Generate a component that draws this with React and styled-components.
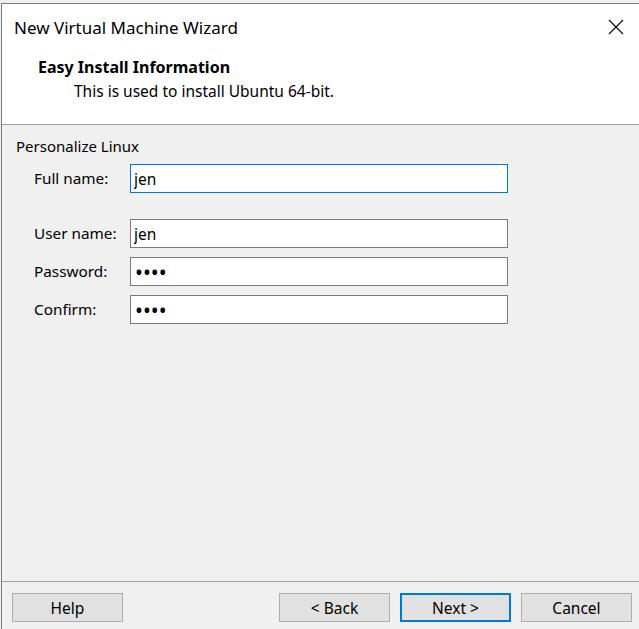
import React from "react";
import styled, { createGlobalStyle } from "styled-components";

const GlobalStyle = createGlobalStyle`
  *, *::before, *::after {
    box-sizing: border-box;
  }
  html, body {
    margin: 0;
    padding: 0;
    background: #f0f0f0;
    overflow: hidden;
  }
  body {
    font-family: "Noto Sans", "Open Sans", sans-serif;
    color: #000;
  }
`;

const fields = [
  { label: "Full name:", value: "jen", focused: true },
  { label: "User name:", value: "jen", spaced: true },
  { label: "Password:", value: "jenn", secret: true },
  { label: "Confirm:", value: "jenn", secret: true },
];

const App = () => {
  return (
    <>
      <GlobalStyle />
      <Window>
        <Header>
          <TitleRow>
            <Title>New Virtual Machine Wizard</Title>
            <CloseButton aria-label="Close">
              <svg width="16" height="16" viewBox="0 0 16 16">
                <path d="M1 1 L15 15 M15 1 L1 15" stroke="#000" strokeWidth="1.1" fill="none" />
              </svg>
            </CloseButton>
          </TitleRow>
          <PageTitle>Easy Install Information</PageTitle>
          <PageSub>This is used to install Ubuntu 64-bit.</PageSub>
        </Header>

        <Body>
          <GroupLabel>Personalize Linux</GroupLabel>
          <Form>
            {fields.map((f) => (
              <React.Fragment key={f.label}>
                <Label $spaced={f.spaced}>{f.label}</Label>
                <Field
                  $spaced={f.spaced}
                  $focused={f.focused}
                  $secret={f.secret}
                  type={f.secret ? "password" : "text"}
                  defaultValue={f.value}
                  readOnly
                />
              </React.Fragment>
            ))}
          </Form>
        </Body>

        <Footer>
          <Button>Help</Button>
          <Spacer />
          <Button>&lt; Back</Button>
          <Button $primary>Next &gt;</Button>
          <Button>Cancel</Button>
        </Footer>
      </Window>
    </>
  );
};

export default App;

const Window = styled.div`
  margin: 3px 0 0 1px;
  height: 626px;
  border-top: 1px solid #7a7a7a;
  border-left: 1px solid #7a7a7a;
  display: flex;
  flex-direction: column;
  background: #f0f0f0;
`;

const Header = styled.div`
  background: #fff;
  height: 121px;
  flex: none;
  border-bottom: 1px solid #a0a0a0;
  display: flex;
  flex-direction: column;
`;

const TitleRow = styled.div`
  display: flex;
  align-items: center;
  justify-content: space-between;
  height: 46px;
  padding: 0 15px 0 12px;
`;

const Title = styled.div`
  font-size: 17px;
  color: #000;
`;

const CloseButton = styled.div`
  width: 16px;
  height: 16px;
  display: flex;
`;

const PageTitle = styled.div`
  margin: 7px 0 0 36px;
  font-size: 16px;
  font-weight: 700;
  line-height: 20px;
`;

const PageSub = styled.div`
  margin: 3px 0 0 72px;
  font-size: 15.5px;
  line-height: 22px;
`;

const Body = styled.div`
  flex: 1;
  padding: 11px 0 0 14px;
`;

const GroupLabel = styled.div`
  font-size: 15px;
  line-height: 20px;
`;

const Form = styled.div`
  display: grid;
  grid-template-columns: 96px 378px;
  row-gap: 9px;
  margin: 8px 0 0 18px;
`;

const Label = styled.div`
  display: flex;
  align-items: center;
  font-size: 15.3px;
  margin-top: ${(p) => (p.$spaced ? "17px" : "0")};
  height: 27px;
`;

const Field = styled.input`
  width: 378px;
  height: 29px;
  margin: ${(p) => (p.$spaced ? "17px" : "0")} 0 0 0;
  padding: 0 ${(p) => (p.$secret ? "4px" : "3px")};
  background: #fff;
  border: 1px solid ${(p) => (p.$focused ? "#0078d7" : "#7a7a7a")};
  outline: none;
  font-family: "Noto Sans", sans-serif;
  font-size: ${(p) => (p.$secret ? "21px" : "15.5px")};
  letter-spacing: 0;
  color: #000;
`;

const Footer = styled.div`
  height: 48px;
  flex: none;
  border-top: 1px solid #a0a0a0;
  display: flex;
  align-items: flex-start;
  gap: 10px;
  padding: 11px 7px 0 10px;
`;

const Spacer = styled.div`
  flex: 1;
`;

const Button = styled.div`
  width: 111px;
  height: 29px;
  display: flex;
  align-items: center;
  justify-content: center;
  background: #e1e1e1;
  border: ${(p) => (p.$primary ? "2px solid #0078d7" : "1px solid #adadad")};
  font-size: 15.5px;
  color: #000;
`;
